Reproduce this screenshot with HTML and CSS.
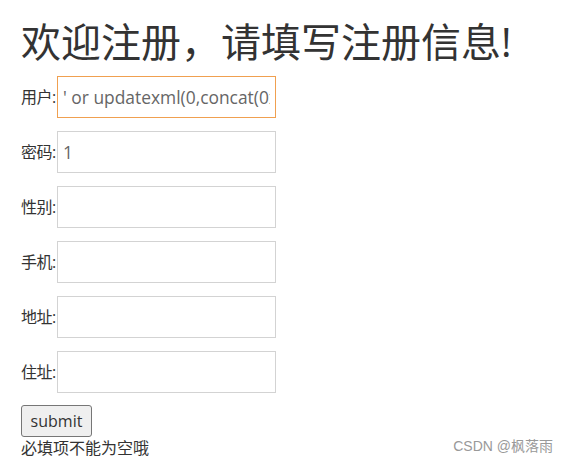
FILE: index.html
```html
<!DOCTYPE html>
<html lang="zh">
<head>
<meta charset="utf-8">
<title>注册</title>
<link rel="stylesheet" href="styles.css">
</head>
<body>
<div class="page">
  <h1 class="title">欢迎注册，请填写注册信息!</h1>
  <form class="form">
    <div class="row"><label class="label">用户:</label><input class="field focused" type="text" value="' or updatexml(0,concat(0x7e,database()),0) or '"></div>
    <div class="row"><label class="label">密码:</label><input class="field" type="text" value="1"></div>
    <div class="row"><label class="label">性别:</label><input class="field" type="text"></div>
    <div class="row"><label class="label">手机:</label><input class="field" type="text"></div>
    <div class="row"><label class="label">地址:</label><input class="field" type="text"></div>
    <div class="row"><label class="label">住址:</label><input class="field" type="text"></div>
    <button class="submit" type="button">submit</button>
    <div class="note">必填项不能为空哦</div>
  </form>
</div>
<div class="watermark">CSDN @枫落雨</div>
</body>
</html>
```

FILE: styles.css
```css
html, body {
  margin: 0;
  padding: 0;
  background: #fff;
}
body {
  font-family: "Open Sans", "Noto Sans CJK SC", sans-serif;
  color: #333;
  width: 568px;
  height: 463px;
  position: relative;
  overflow: hidden;
}
.page {
  padding: 14px 0 0 21px;
}
.title {
  font-size: 40px;
  font-weight: 400;
  line-height: 56px;
  margin: 0 0 6px;
  color: #333;
  letter-spacing: 0;
}
.form {
  display: flex;
  flex-direction: column;
  align-items: flex-start;
  gap: 13px;
}
.row {
  display: flex;
  align-items: center;
  height: 42px;
}
.label {
  font-size: 16px;
  line-height: 20px;
  color: #333;
  width: 36px;
  white-space: nowrap;
  letter-spacing: -0.5px;
}
.field {
  box-sizing: border-box;
  width: 219px;
  height: 42px;
  margin: 0;
  border: 1px solid #d3d3d3;
  padding: 0 5px;
  font-family: "Open Sans", "Noto Sans CJK SC", sans-serif;
  font-size: 17.4px;
  color: #666;
  background: #fff;
  outline: none;
}
.field.focused {
  border-color: #f0a050;
}
.submit {
  box-sizing: border-box;
  width: 71px;
  height: 32px;
  margin-top: -1px;
  padding: 0;
  border: 1px solid #767676;
  border-radius: 3px;
  background: #efefef;
  font-family: "Open Sans", "Noto Sans CJK SC", sans-serif;
  font-size: 16px;
  color: #333;
}
.note {
  margin-top: -13px;
  font-size: 16px;
  line-height: 22px;
  color: #333;
}
.watermark {
  position: absolute;
  right: 15px;
  top: 436px;
  font-family: "Liberation Sans", "Noto Sans CJK SC", sans-serif;
  font-size: 14px;
  line-height: 20px;
  color: #999;
}
```
